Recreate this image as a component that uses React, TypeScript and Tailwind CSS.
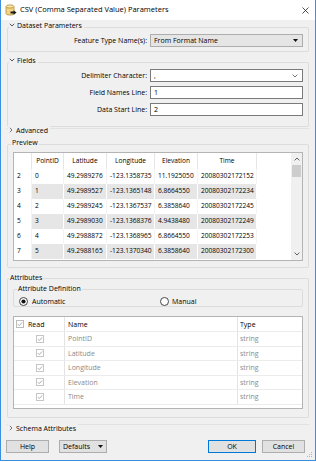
import React from 'react';

// CSV reader parameters dialog (FME style)

const PREVIEW_HEAD = ['', 'PointID', 'Latitude', 'Longitude', 'Elevation', 'Time'];
const PREVIEW_ROWS = [
  ['2', '0', '49.2989276', '-123.1358735', '11.1925050', '20080302172152'],
  ['3', '1', '49.2989527', '-123.1365148', '6.8664550', '20080302172234'],
  ['4', '2', '49.2989245', '-123.1367537', '6.3858640', '20080302172245'],
  ['5', '3', '49.2989030', '-123.1368376', '4.9438480', '20080302172249'],
  ['6', '4', '49.2988872', '-123.1368965', '6.8664550', '20080302172253'],
  ['7', '5', '49.2988165', '-123.1370340', '6.3858640', '20080302172300'],
];
const COLS = ['w-[18px]', 'w-[32px]', 'w-[43px]', 'w-[48px]', 'w-[43px]', 'w-[59px]'];

const ATTRS = ['PointID', 'Latitude', 'Longitude', 'Elevation', 'Time'];

function Chevron({ open }: { open: boolean }) {
  return (
    <svg width="6" height="6" viewBox="0 0 6 6" className="shrink-0">
      {open ? (
        <path d="M0.8 1.8 L3 4 L5.2 1.8" fill="none" stroke="#444" strokeWidth="0.9" />
      ) : (
        <path d="M1.8 0.8 L4 3 L1.8 5.2" fill="none" stroke="#666" strokeWidth="0.9" />
      )}
    </svg>
  );
}

function Check({ header }: { header?: boolean }) {
  return (
    <svg width="8" height="8" viewBox="0 0 8 8" className="shrink-0">
      <rect x="0.5" y="0.5" width="7" height="7" fill="#fff" stroke={header ? '#bcbcbc' : '#c6c6c6'} />
      <path d="M1.8 4.1 L3.3 5.6 L6.2 2.4" fill="none" stroke="#a6a6a6" strokeWidth="0.9" />
    </svg>
  );
}

function Radio({ on }: { on?: boolean }) {
  return (
    <svg width="9" height="9" viewBox="0 0 9 9" className="shrink-0">
      <circle cx="4.5" cy="4.5" r="4" fill="#fff" stroke="#333" strokeWidth="0.9" />
      {on && <circle cx="4.5" cy="4.5" r="2.1" fill="#111" />}
    </svg>
  );
}

function AppIcon() {
  return (
    <svg width="12" height="12" viewBox="0 0 12 12" className="shrink-0">
      <path d="M1 2.5 V9.5 A4 1.6 0 0 0 9 9.5 V2.5" fill="#f2d688" stroke="#b48a2c" strokeWidth="0.8" />
      <ellipse cx="5" cy="2.5" rx="4" ry="1.6" fill="#f8e6ad" stroke="#b48a2c" strokeWidth="0.8" />
      <path d="M5.5 7.6 H8.6 V6.2 L11.5 8.6 L8.6 11 V9.6 H5.5 Z" fill="#1b1b1b" />
    </svg>
  );
}

function Field({ label, value, combo }: { label: string; value: string; combo?: boolean }) {
  return (
    <div className="flex items-center">
      <div className="w-[142px] pr-[3px] text-right">{label}</div>
      <div className="flex-1 mr-[5px] h-[13px] bg-white border border-[#7a7a7a] flex items-center pl-[3px] pr-[4px]">
        <span className="flex-1">{value}</span>
        {combo && (
          <svg width="6" height="4" viewBox="0 0 6 4">
            <path d="M0.6 0.6 L3 3 L5.4 0.6" fill="none" stroke="#555" strokeWidth="0.8" />
          </svg>
        )}
      </div>
    </div>
  );
}

function Button({ children, primary, className }: { children: React.ReactNode; primary?: boolean; className: string }) {
  return (
    <div
      className={`h-[13px] flex items-center justify-center bg-[#e1e1e1] border ${
        primary ? 'border-[#0078d7]' : 'border-[#adadad]'
      } ${className}`}
    >
      {children}
    </div>
  );
}

export default function App() {
  return (
    <div className="relative w-[316px] h-[461px] bg-[#f0f0f0] border-x border-b border-[#3c8fdf] flex flex-col overflow-hidden text-[7px] leading-none text-black font-['Open_Sans','Noto_Sans',sans-serif]">
      {/* title bar */}
      <div className="h-[20px] bg-white flex items-center pl-[4px] pr-[6px] shrink-0">
        <AppIcon />
        <span className="ml-[3px] text-[7.5px]">CSV (Comma Separated Value) Parameters</span>
        <div className="flex-1" />
        <svg width="7" height="7" viewBox="0 0 7 7">
          <path d="M0.5 0.5 L6.5 6.5 M6.5 0.5 L0.5 6.5" stroke="#222" strokeWidth="0.8" />
        </svg>
      </div>

      <div className="flex flex-col px-[6px]">
        {/* Dataset Parameters */}
        <div className="mt-[7px] border border-[#dcdcdc] rounded-[2px] pb-[4px]">
          <div className="-mt-[8px] ml-[1px] h-[10px] w-fit flex items-center gap-[2px] bg-[#f0f0f0] pr-[2px]">
            <Chevron open />
            <span>Dataset Parameters</span>
          </div>
          <div className="mt-[4px] flex items-center">
            <div className="w-[142px] pr-[3px] text-right">Feature Type Name(s):</div>
            <div className="flex-1 mr-[5px] h-[13px] bg-[#e5e5e5] border border-[#adadad] flex items-center pl-[3px] pr-[4px]">
              <span className="flex-1">From Format Name</span>
              <svg width="5" height="3" viewBox="0 0 5 3">
                <path d="M0 0 H5 L2.5 3 Z" fill="#111" />
              </svg>
            </div>
          </div>
        </div>

        {/* Fields */}
        <div className="mt-[10px] border border-[#dcdcdc] rounded-[2px] pb-[10px]">
          <div className="-mt-[8px] ml-[1px] h-[10px] w-fit flex items-center gap-[2px] bg-[#f0f0f0] pr-[2px]">
            <Chevron open />
            <span>Fields</span>
          </div>
          <div className="mt-[4px] flex flex-col gap-[4px]">
            <Field label="Delimiter Character:" value="," combo />
            <Field label="Field Names Line:" value="1" />
            <Field label="Data Start Line:" value="2" />
          </div>
        </div>

        {/* Advanced (collapsed) */}
        <div className="mt-[1px] border-t border-[#e2e2e2]">
          <div className="-mt-[4px] ml-[1px] h-[10px] w-fit flex items-center gap-[2px] bg-[#f0f0f0] pr-[2px]">
            <Chevron open={false} />
            <span>Advanced</span>
          </div>
        </div>

        {/* Preview */}
        <div className="mt-[9px] border border-[#dcdcdc] rounded-[2px] pb-[6px]">
          <div className="-mt-[8px] ml-[3px] h-[10px] w-fit flex items-center bg-[#f0f0f0] px-[1px]">
            <span>Preview</span>
          </div>
          <div className="mt-[5px] mx-[5px] h-[109px] bg-white border border-[#b4b4b4] flex text-[6.6px]">
            <div className="flex-1 flex flex-col">
              <div className="flex h-[16px] shrink-0">
                {PREVIEW_HEAD.map((h, i) => (
                  <div key={i} className={`${COLS[i]} shrink-0 flex items-center justify-center border-r border-[#e6e6e6]`}>
                    {h}
                  </div>
                ))}
              </div>
              {PREVIEW_ROWS.map((row, r) => (
                <div key={r} className="flex h-[15px] shrink-0">
                  {row.map((c, i) => (
                    <div
                      key={i}
                      className={`${COLS[i]} shrink-0 flex items-center pl-[3px] border-r whitespace-nowrap overflow-hidden ${
                        i > 0 && r % 2 === 1 ? 'bg-[#e6e6e6] border-white' : 'bg-white border-[#f4f4f4]'
                      }`}
                    >
                      {c}
                    </div>
                  ))}
                </div>
              ))}
            </div>
            {/* scrollbar */}
            <div className="w-[11px] bg-[#f0f0f0] flex flex-col items-center">
              <div className="h-[12px] flex items-center justify-center">
                <svg width="6" height="4" viewBox="0 0 6 4">
                  <path d="M0.6 3.4 L3 1 L5.4 3.4" fill="none" stroke="#606060" strokeWidth="1" />
                </svg>
              </div>
              <div className="w-[9px] h-[12px] bg-[#cdcdcd]" />
              <div className="flex-1" />
              <div className="h-[12px] flex items-center justify-center">
                <svg width="6" height="4" viewBox="0 0 6 4">
                  <path d="M0.6 0.6 L3 3 L5.4 0.6" fill="none" stroke="#606060" strokeWidth="1" />
                </svg>
              </div>
            </div>
          </div>
        </div>

        {/* Attributes */}
        <div className="mt-[10px] border border-[#dcdcdc] rounded-[2px] pb-[8px]">
          <div className="-mt-[7px] ml-[1px] h-[10px] w-fit flex items-center bg-[#f0f0f0] px-[1px]">
            <span>Attributes</span>
          </div>

          <div className="mt-[7px] mx-[5px] border border-[#dcdcdc] rounded-[2px]">
            <div className="-mt-[7px] ml-[3px] h-[10px] w-fit flex items-center bg-[#f0f0f0] px-[1px]">
              <span>Attribute Definition</span>
            </div>
            <div className="mt-[3px] h-[10px] flex items-center">
              <div className="w-[146px] pl-[5px] flex items-center gap-[4px]">
                <Radio on />
                <span>Automatic</span>
              </div>
              <div className="flex items-center gap-[3px]">
                <Radio />
                <span>Manual</span>
              </div>
            </div>
          </div>

          <div className="mt-[9px] mx-[5px] h-[93px] bg-white border border-[#b4b4b4] flex flex-col">
            <div className="flex h-[15px] shrink-0 border-b border-[#ececec]">
              <div className="w-[51px] shrink-0 flex items-center gap-[4px] pl-[2px] border-r border-[#e3e3e3]">
                <Check header />
                <span>Read</span>
              </div>
              <div className="w-[173px] shrink-0 flex items-center pl-[3px] border-r border-[#e3e3e3]">Name</div>
              <div className="flex-1 flex items-center pl-[2px]">Type</div>
            </div>
            {ATTRS.map((a) => (
              <div key={a} className="flex h-[14.5px] shrink-0 border-b border-[#ececec] text-[#8a8a8a]">
                <div className="w-[51px] shrink-0 flex items-center pl-[22px] border-r border-[#e3e3e3]">
                  <Check />
                </div>
                <div className="w-[173px] shrink-0 flex items-center pl-[3px] border-r border-[#e3e3e3]">{a}</div>
                <div className="flex-1 flex items-center pl-[2px]">string</div>
              </div>
            ))}
          </div>
        </div>

        {/* Schema Attributes (collapsed) */}
        <div className="mt-[6px] border-t border-[#e2e2e2]">
          <div className="-mt-[2px] ml-[1px] h-[10px] w-fit flex items-center gap-[2px] bg-[#f0f0f0] pr-[2px]">
            <Chevron open={false} />
            <span>Schema Attributes</span>
          </div>
        </div>
      </div>

      {/* buttons */}
      <div className="mt-[7px] flex items-center pl-[5px] pr-[10px]">
        <Button className="w-[43px]">Help</Button>
        <Button className="ml-[10px] w-[48px] gap-[8px]">
          <span>Defaults</span>
          <svg width="5" height="3" viewBox="0 0 5 3">
            <path d="M0 0 H5 L2.5 3 Z" fill="#111" />
          </svg>
        </Button>
        <div className="flex-1" />
        <Button primary className="w-[48px]">OK</Button>
        <Button className="ml-[6px] w-[43px]">Cancel</Button>
      </div>

      {/* resize grip */}
      <svg width="7" height="7" viewBox="0 0 7 7" className="absolute right-[2px] bottom-[2px]">
        <g fill="#b5b5b5">
          <rect x="5" y="1" width="1" height="1" />
          <rect x="3" y="3" width="1" height="1" />
          <rect x="5" y="3" width="1" height="1" />
          <rect x="1" y="5" width="1" height="1" />
          <rect x="3" y="5" width="1" height="1" />
          <rect x="5" y="5" width="1" height="1" />
        </g>
      </svg>
    </div>
  );
}
